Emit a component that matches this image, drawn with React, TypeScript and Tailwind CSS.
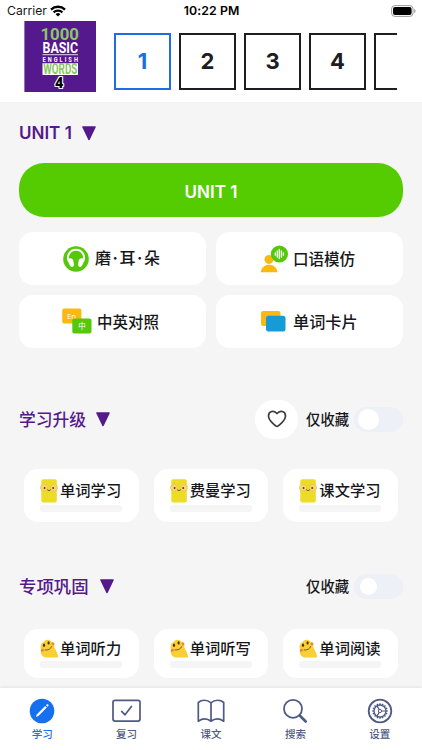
import React from 'react';

const latin = "font-['Inter','Noto_Sans_CJK_SC',sans-serif]";
const cjk = "font-['Noto_Sans_CJK_SC',sans-serif]";

function StatusBar() {
  return (
    <div className="grid h-[21px] shrink-0 grid-cols-3 items-center pl-[7px] pr-[6px]">
      <div className="flex items-center gap-[3px]">
        <span className="text-[12.2px] leading-[21px] text-[#161616]">Carrier</span>
        <svg width="16" height="12" viewBox="0 0 16 12" fill="none" stroke="#000" strokeWidth="2.4">
          <path d="M1 4.6a10.2 10.2 0 0 1 14 0" />
          <path d="M3.600 7.400a6.400 6.400 0 0 1 8.800 0" strokeWidth="2.200" />
          <path d="M8 11.600 5.600 9.200a3.500 3.500 0 0 1 4.800 0Z" fill="#000" stroke="none" />
        </svg>
      </div>
      <span className="text-center text-[12.3px] font-semibold leading-[21px] tracking-[0.1px] text-black">10:22 PM</span>
      <svg className="justify-self-end" width="25" height="12" viewBox="0 0 25 12">
        <rect x=".6" y=".6" width="21.4" height="10.8" rx="3.2" fill="#fff" stroke="#9a9a9a" />
        <rect x="2" y="2" width="18.6" height="8" rx="2" fill="#000" />
        <path d="M23.3 4v4c1.6-.6 1.6-3.4 0-4Z" fill="#888" />
      </svg>
    </div>
  );
}

function BookCover() {
  return (
    <svg className="shrink-0" width="72" height="71" viewBox="0 0 72 71" fontFamily="Roboto, sans-serif" fontWeight="700">
      <rect width="72" height="71" x=".4" fill="#54198c" />
      <text x="16.500" y="19.200" fontSize="17" fill="#8ac764" textLength="38.500" lengthAdjust="spacingAndGlyphs">1000</text>
      <text x="18.500" y="32" fontSize="15.500" fill="#fff" textLength="35.500" lengthAdjust="spacingAndGlyphs">BASIC</text>
      <rect x="18.500" y="33.200" width="35.500" height="1" fill="#e4d8ee" />
      <text transform="translate(18.5 40.8) scale(.73 1)" fontSize="7.800" fill="#fff" textLength="48.500" lengthAdjust="spacing">ENGLISH</text>
      <rect x="18.500" y="42.200" width="35.500" height="11.800" fill="#fff" />
      <text x="19.300" y="53" fontSize="14" fill="#8ac764" textLength="34" lengthAdjust="spacingAndGlyphs">WORDS</text>
      <text x="31" y="67" fontSize="14.500" fontWeight="900" fill="#000" stroke="#fff" strokeWidth="2.200" strokeLinejoin="round" paintOrder="stroke">4</text>
    </svg>
  );
}

function Triangle({ className = '' }: { className?: string }) {
  return (
    <svg className={className} width="14" height="15" viewBox="0 0 14 15">
      <path d="M1 1h12L7 13.500Z" fill="#54198c" stroke="#54198c" strokeWidth="1.600" strokeLinejoin="round" />
    </svg>
  );
}

function Headphones() {
  return (
    <svg width="26" height="26" viewBox="0 0 26 26">
      <circle cx="13" cy="13" r="12.800" fill="#55c80a" />
      <path d="M6 15.500A8 8 0 1 1 20 15.500" fill="none" stroke="#fff" strokeWidth="2" />
      <path d="M5 12.800c2.600-1.200 5-.4 5.400 2.100l.5 3.700c.3 2.300-2.200 3.300-3.400 1.600C6.200 18.300 5 16.500 5 12.800ZM21 12.800c-2.600-1.200-5-.4-5.400 2.100l-.5 3.700c-.3 2.300 2.200 3.300 3.400 1.600 1.300-1.900 2.500-3.700 2.500-7.400Z" fill="#fff" />
    </svg>
  );
}

function Translate() {
  return (
    <svg width="30" height="27" viewBox="0 0 30 27">
      <rect x=".2" y=".5" width="19.200" height="15" rx="2" fill="#f9b90e" />
      <text x="5" y="11" fontSize="7.800" fill="#fff" fontFamily="Noto Sans, sans-serif">En</text>
      <rect x="10.300" y="10.500" width="19.200" height="15" rx="2" fill="#55c80a" />
      <text x="16.300" y="20.800" fontSize="7.500" fill="#fff" fontFamily="Noto Sans CJK SC, sans-serif">中</text>
    </svg>
  );
}

function Speaker() {
  return (
    <svg width="28" height="28" viewBox="0 0 28 28">
      <circle cx="9" cy="14.400" r="4.500" fill="#f9b90e" />
      <path d="M.8 27.300c.6-10 16-10 16.600 0Z" fill="#f9b90e" />
      <circle cx="19.400" cy="9" r="8.600" fill="#55c80a" />
      <path d="M15.300 7.800v2.400M17.300 5.800v6.400M19.300 4.400v9.200M21.400 6v6M23.400 7.800v2.400" stroke="#fff" strokeWidth="1.300" strokeLinecap="round" />
    </svg>
  );
}

function Cards() {
  return (
    <svg width="25" height="21" viewBox="0 0 25 21">
      <rect x="0" y="0" width="19.500" height="15" rx="2.300" fill="#f9b90e" />
      <rect x="5" y="4.800" width="19.500" height="15.700" rx="2.500" fill="#149bd8" />
    </svg>
  );
}

function BlockFace() {
  return (
    <svg width="18" height="24" viewBox="0 0 18 24">
      <rect x="1.300" y=".2" width="15.500" height="23.300" rx="1.800" fill="#ecdc25" />
      <g fill="#f4d968" stroke="#f7ba58" strokeWidth=".7">
        <circle cx="4" cy="8.700" r="3.500" />
        <circle cx="14" cy="8.700" r="3.500" />
      </g>
      <circle cx="4.600" cy="9" r=".9" fill="#54351c" />
      <circle cx="13.200" cy="9" r=".9" fill="#54351c" />
      <path d="M7.200 10.700q1.800 2 3.600 0" fill="none" stroke="#54351c" strokeWidth=".8" />
    </svg>
  );
}

function WormFace() {
  return (
    <svg width="19" height="19" viewBox="0 0 19 19">
      <path d="M5 18.500c-4-1.500-5-5-3.700-7.500C-.2 8.500.5 4 3.700 3 5 .2 9.500 0 11.200 2.500 13.800 3 14.800 5.500 14 7.500c1.500 3.500 4 7 4.200 11Z" fill="#f8cf35" />
      <circle cx="2.300" cy="11.200" r="1.500" fill="#ef8439" />
      <circle cx="13" cy="5" r="1.400" fill="#ef8439" />
      <ellipse cx="4" cy="6.200" rx="1.100" ry="1.700" fill="#453321" />
      <ellipse cx="8.600" cy="3.900" rx="1.100" ry="1.700" fill="#453321" />
      <path d="M5 11c3 .5 5.800-1 6.700-3.500" fill="none" stroke="#6b421d" strokeWidth=".8" strokeLinecap="round" />
    </svg>
  );
}

function ActionCard({ icon, label, pad, gap, size = 'text-[16px]' }: { icon: React.ReactNode; label: React.ReactNode; pad: string; gap: string; size?: string }) {
  return (
    <button className={`flex h-[53px] items-center rounded-[14px] bg-white ${pad} ${gap}`}>
      {icon}
      <span className={`whitespace-nowrap pb-[2px] font-medium leading-6 text-[#17171b] ${cjk} ${size}`}>{label}</span>
    </button>
  );
}

function LessonCard({ label, worm = false }: { label: string; worm?: boolean }) {
  return (
    <div className={`flex flex-col rounded-[14px] bg-white pl-[16px] ${worm ? 'h-[49px] pt-[7px]' : 'h-[53px] pt-[9px]'}`}>
      <div className="flex h-[25px] items-center gap-[2px]">
        {worm ? <WormFace /> : <BlockFace />}
        <span className={`whitespace-nowrap pb-[2px] text-[15.300px] font-medium leading-[23px] text-[#17171b] ${cjk} ${worm ? '-ml-px' : ''}`}>{label}</span>
      </div>
      <div className={`h-[7px] w-[82px] rounded-[3px] bg-[#f5f5f5] ${worm ? '' : 'mt-[2px]'}`} />
    </div>
  );
}

function Toggle({ small = false }: { small?: boolean }) {
  return (
    <div className={`flex h-[25px] w-[49px] items-center rounded-full bg-[#edf0f6] ${small ? 'pl-[6px]' : 'pl-[4px]'}`}>
      <div className={`rounded-full bg-white ${small ? 'size-[17px]' : 'size-[21px]'}`} />
    </div>
  );
}

function FavouriteLabel() {
  return <span className={`mr-[5px] pb-px text-[14.300px] font-medium leading-6 text-[#17171b] ${cjk}`}>仅收藏</span>;
}

function GearIcon() {
  const teeth = Array.from({ length: 16 }, (_, i) => i * 22.5);
  return (
    <svg width="26" height="26" viewBox="0 0 26 26" fill="none" stroke="#4f5a84">
      <circle cx="13" cy="13" r="11.300" strokeWidth="1.800" />
      <circle cx="13" cy="13" r="6" strokeWidth="1.300" />
      {teeth.map((a) => (
        <path key={a} d="M13 5.300v1.800" strokeWidth="1.400" transform={`rotate(${a} 13 13)`} />
      ))}
      <circle cx="13" cy="13" r="1.600" strokeWidth="1" />
      <path d="M14.600 13h4.300M12.200 11.600 10 7.900M12.200 14.400 10 18.100" strokeWidth="1.200" />
    </svg>
  );
}

const tabs = [
  {
    label: '学习',
    icon: (
      <svg width="26" height="26" viewBox="0 0 26 26">
        <circle cx="13" cy="13" r="12.300" fill="#1470ef" />
        <path d="m6.900 19 .9-2.600 8.400-8.400 1.600 1.600-8.400 8.400Z" fill="#fff" />
        <path d="m17 7.200.6-.6a1.130 1.130 0 0 1 1.600 1.600l-.6.6Z" fill="#fff" />
      </svg>
    ),
  },
  {
    label: '复习',
    icon: (
      <svg width="29" height="26" viewBox="0 0 29 26" fill="none" stroke="#4f5a84" strokeWidth="1.700">
        <rect x="1" y="2.300" width="27" height="20.800" rx="2" />
        <path d="m9.700 13.300 3.300 3.500 6.400-8.300" strokeLinecap="round" strokeLinejoin="round" />
      </svg>
    ),
  },
  {
    label: '课文',
    icon: (
      <svg width="28" height="26" viewBox="0 0 28 26" fill="none" stroke="#4f5a84" strokeWidth="1.700" strokeLinejoin="round">
        <path d="M14 4.800C10 1.300 4.500 1.600 1.300 4.500v18.700c4-2.800 9-2.800 12.700 0 3.700-2.800 8.700-2.800 12.700 0V4.500C23.500 1.600 18 1.300 14 4.800ZM14 4.800v18.400" />
      </svg>
    ),
  },
  {
    label: '搜索',
    icon: (
      <svg width="26" height="26" viewBox="0 0 26 26" fill="none" stroke="#4f5a84">
        <circle cx="11" cy="10.800" r="9" strokeWidth="1.800" />
        <path d="m17.700 17.500 6 6" strokeWidth="2.600" strokeLinecap="round" />
      </svg>
    ),
  },
  { label: '设置', icon: <GearIcon /> },
];

export default function App() {
  return (
    <main className={`flex h-[750px] w-[422px] flex-col overflow-hidden bg-[#f5f5f5] ${latin}`}>
      <header className="h-[102px] shrink-0 bg-white">
        <StatusBar />
        <div className="flex items-start pl-[24px] pr-[25px]">
          <BookCover />
          <div className="ml-[18px] mt-[12px] flex min-w-0 flex-1 gap-[8px] overflow-hidden">
            {['1', '2', '3', '4', ''].map((n, i) => (
              <button
                key={i}
                className={`flex size-[57px] shrink-0 items-center justify-center border-2 text-[22px] font-bold ${i === 0 ? 'border-[#1b6fe0] text-[#1b6fe0]' : 'border-[#1d1d22] text-[#1d1d22]'}`}
              >
                {n}
              </button>
            ))}
          </div>
        </div>
      </header>

      <section className="flex-1 overflow-hidden px-[19px]">
        <div className="mt-[19px] flex h-[24px] items-center gap-[10px]">
          <h2 className="text-[17px] font-semibold leading-6 text-[#54198c]">UNIT 1</h2>
          <Triangle />
        </div>
        <button className="mt-[18px] flex h-[54px] w-[384px] items-center justify-center rounded-[25px] bg-[#55cb02] pt-[3px] text-[17px] font-semibold leading-6 text-white">UNIT 1</button>
        <div className="mt-[15px] grid grid-cols-2 gap-[10px]">
          <ActionCard
            icon={<Headphones />}
            label={<>磨<span className="inline-block w-[8.500px] text-center font-['Inter',sans-serif] font-bold">·</span>耳<span className="inline-block w-[8.500px] text-center font-['Inter',sans-serif] font-bold">·</span>朵</>}
            pad="pl-[44px]"
            gap="gap-[6px]"
          />
          <ActionCard icon={<Speaker />} label="口语模仿" pad="pl-[44px]" gap="gap-[5px]" size="text-[15.500px]" />
          <ActionCard icon={<Translate />} label="中英对照" pad="pl-[43px]" gap="gap-[5px]" size="text-[15.500px]" />
          <ActionCard icon={<Cards />} label="单词卡片" pad="pl-[45px]" gap="gap-[7px]" size="text-[16.200px]" />
        </div>

        <div className="mt-[51px] flex h-[40px] items-center">
          <h2 className={`mr-[10px] text-[16.800px] font-medium leading-6 text-[#54198c] ${cjk}`}>学习升级</h2>
          <Triangle />
          <button className="ml-auto mr-[8px] flex h-[39px] w-[43px] items-center justify-center rounded-[19px] bg-white">
            <svg width="20" height="18" viewBox="0 0 20 18" fill="none" stroke="#3b3c40" strokeWidth="1.700" strokeLinejoin="round">
              <path d="M10 3.600C6.900-.4 1.500 1.200 1.500 6c0 4.500 4.300 7.200 7.300 9.900.8.700 1.600.7 2.400 0 3-2.700 7.300-5.400 7.300-9.900 0-4.800-5.400-6.400-8.500-2.400Z" />
            </svg>
          </button>
          <FavouriteLabel />
          <Toggle />
        </div>
        <div className="mx-[5px] mt-[30px] grid grid-cols-3 gap-[15px]">
          <LessonCard label="单词学习" />
          <LessonCard label="费曼学习" />
          <LessonCard label="课文学习" />
        </div>

        <div className="mt-[44px] flex h-[40px] items-center">
          <h2 className={`mr-[11px] text-[17.400px] font-medium leading-6 text-[#54198c] ${cjk}`}>专项巩固</h2>
          <Triangle className="mr-auto" />
          <FavouriteLabel />
          <Toggle small />
        </div>
        <div className="mx-[5px] mt-[23px] grid grid-cols-3 gap-[15px]">
          <LessonCard worm label="单词听力" />
          <LessonCard worm label="单词听写" />
          <LessonCard worm label="单词阅读" />
        </div>
      </section>

      <nav className="grid h-[62px] shrink-0 grid-cols-5 bg-white pt-[10px] shadow-[0_-1px_3px_rgba(0,0,0,0.07)]">
        {tabs.map((tab, i) => (
          <button key={tab.label} className={`flex flex-col items-center ${i === 0 ? 'text-[#1470ef]' : 'text-[#4f5a84]'}`}>
            {tab.icon}
            <span className={`text-[10.500px] font-medium leading-[19px] ${cjk}`}>{tab.label}</span>
          </button>
        ))}
      </nav>
    </main>
  );
}
